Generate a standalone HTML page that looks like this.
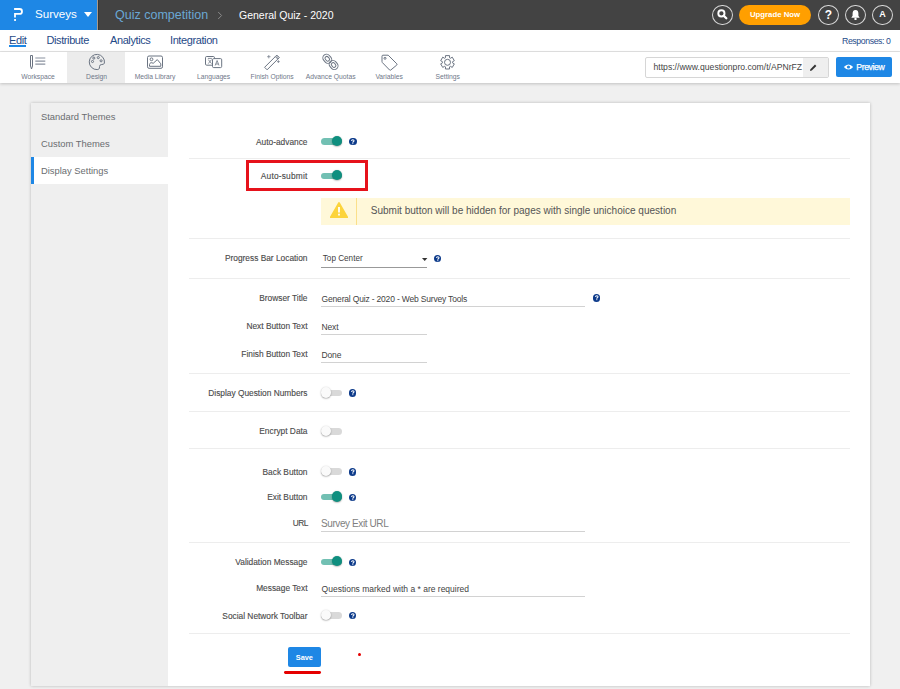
<!DOCTYPE html><html><head><meta charset="utf-8"><style>
*{margin:0;padding:0;box-sizing:border-box}
html,body{width:900px;height:689px;overflow:hidden;background:#f0f0f0;font-family:"Liberation Sans",sans-serif}
.a{position:absolute;white-space:nowrap}
.lab{position:absolute;right:592.5px;font-size:8.35px;color:#4a4a4a;-webkit-text-stroke:0.12px #4a4a4a;line-height:12px;text-align:right;white-space:nowrap}
.sep{position:absolute;left:189px;width:661px;height:1px;background:#ededed}
.tg{position:absolute;width:22px;height:12px}
.tg .tr{position:absolute;left:0.5px;top:3px;width:21px;height:6.5px;border-radius:3.5px;background:#d9d9d9}
.tg .kn{position:absolute;top:0.8px;width:10.2px;height:10.2px;border-radius:50%;background:#fafafa;box-shadow:0 0.6px 1.6px rgba(0,0,0,.38)}
.tg.on .tr{background:#72c0b3}
.tg.on .kn{left:11.6px;background:#0f8f7f}
.tg.off .kn{left:0}
.q{position:absolute;width:7.6px;height:7.6px;border-radius:50%;background:#0c3a8a}
.inp{position:absolute;border-bottom:1px solid #d2d2d2;font-size:8.5px;color:#424242;letter-spacing:-0.18px;white-space:nowrap}
</style></head><body>
<div class="a" style="left:0;top:0;width:900px;height:30px;background:#434343"></div>
<div class="a" style="left:0;top:0;width:97px;height:30px;background:#1e87e5"></div>
<div class="a" style="left:97px;top:0;width:1px;height:30px;background:#a89a8c"></div><div class="a" style="left:98px;top:0;width:1px;height:30px;background:#383838"></div>
<svg class="a" style="left:0;top:0" width="30" height="30" viewBox="0 0 30 30"><path d="M14.1 9H19.6Q22 9 22 11.4Q22 13.9 19.6 13.9H15V17.4" fill="none" stroke="#fff" stroke-width="1.8"/><rect x="14.1" y="19.1" width="1.9" height="1.8" fill="#fff"/></svg>
<div class="a" style="left:35px;top:6px;font-size:11.6px;color:#fff;line-height:16px">Surveys</div>
<svg class="a" style="left:84px;top:12px" width="8" height="5.5" viewBox="0 0 8 5.5"><path d="M0 0H8L4 5Z" fill="#fff"/></svg>
<div class="a" style="left:115px;top:6.5px;font-size:12.5px;color:#6aa8d5;line-height:17px">Quiz competition</div>
<svg class="a" style="left:217px;top:11px" width="6" height="9" viewBox="0 0 6 9"><path d="M1.2 1L4.6 4.5L1.2 8" fill="none" stroke="#8a8a8a" stroke-width="1"/></svg>
<div class="a" style="left:239px;top:7px;font-size:10.5px;color:#fff;line-height:16px">General Quiz - 2020</div>
<div class="a" style="left:712px;top:4.6px;width:20.8px;height:20.6px;border:1px solid #d8d8d8;border-radius:50%"></div>
<svg class="a" style="left:716px;top:8px" width="13" height="13" viewBox="0 0 13 13"><circle cx="5.4" cy="5.4" r="3.1" fill="none" stroke="#fff" stroke-width="1.9"/><path d="M7.7 7.7L10.3 10.3" stroke="#fff" stroke-width="2.3" stroke-linecap="round"/></svg>
<div class="a" style="left:739px;top:4.6px;width:72px;height:20.1px;border-radius:10px;background:#ff9f00;color:#fff;font-size:7.8px;font-weight:bold;text-align:center;line-height:19.8px">Upgrade Now</div>
<div class="a" style="left:818px;top:4.6px;width:20.8px;height:20.6px;border:1px solid #d8d8d8;border-radius:50%"></div>
<div class="a" style="left:818px;top:5px;width:21px;height:21px;color:#fff;font-weight:bold;font-size:12px;text-align:center;line-height:20px">?</div>
<div class="a" style="left:845px;top:4.6px;width:20.8px;height:20.6px;border:1px solid #d8d8d8;border-radius:50%"></div>
<svg class="a" style="left:850px;top:9px" width="11" height="12" viewBox="0 0 11 12"><path d="M5.5 1C3.3 1 2.6 2.8 2.6 4.5V6.8L1.3 8.8H9.7L8.4 6.8V4.5C8.4 2.8 7.7 1 5.5 1Z" fill="#fff"/><circle cx="5.5" cy="9.9" r="1.2" fill="#fff"/></svg>
<div class="a" style="left:872px;top:4.6px;width:20.8px;height:20.6px;border:1px solid #d8d8d8;border-radius:50%"></div>
<div class="a" style="left:872px;top:5px;width:21px;height:21px;color:#fff;font-weight:bold;font-size:9px;text-align:center;line-height:19.6px">A</div>
<div class="a" style="left:0;top:30px;width:900px;height:21.5px;background:#fff"></div>
<div class="a" style="left:9px;top:34px;font-size:11px;letter-spacing:-0.4px;color:#1f4a87;line-height:13px">Edit</div>
<div class="a" style="left:46.5px;top:34px;font-size:11px;letter-spacing:-0.4px;color:#1f4a87;line-height:13px">Distribute</div>
<div class="a" style="left:110px;top:34px;font-size:11px;letter-spacing:-0.4px;color:#1f4a87;line-height:13px">Analytics</div>
<div class="a" style="left:170px;top:34px;font-size:11px;letter-spacing:-0.4px;color:#1f4a87;line-height:13px">Integration</div>
<div class="a" style="left:9px;top:44.5px;width:16.5px;height:2px;background:#1e87e5"></div>
<div class="a" style="left:842px;top:36.3px;font-size:8.7px;letter-spacing:-0.38px;color:#1f4c8a;line-height:11px">Responses: 0</div>
<div class="a" style="left:0;top:51px;width:900px;height:1px;background:#e4e4e4"></div>
<div class="a" style="left:0;top:52px;width:900px;height:31px;background:#fff;box-shadow:0 1px 3px rgba(0,0,0,.2)"></div>
<div class="a" style="left:67px;top:52px;width:58.4px;height:31px;background:#ececec"></div>
<div class="a" style="left:8.00px;width:60px;top:71.5px;text-align:center;font-size:6.74px;color:#6f7889;line-height:10px">Workspace</div>
<div class="a" style="left:66.53px;width:60px;top:71.5px;text-align:center;font-size:6.74px;color:#6f7889;line-height:10px">Design</div>
<div class="a" style="left:125.06px;width:60px;top:71.5px;text-align:center;font-size:6.74px;color:#6f7889;line-height:10px">Media Library</div>
<div class="a" style="left:183.59px;width:60px;top:71.5px;text-align:center;font-size:6.74px;color:#6f7889;line-height:10px">Languages</div>
<div class="a" style="left:242.12px;width:60px;top:71.5px;text-align:center;font-size:6.74px;color:#6f7889;line-height:10px">Finish Options</div>
<div class="a" style="left:300.65px;width:60px;top:71.5px;text-align:center;font-size:6.74px;color:#6f7889;line-height:10px">Advance Quotas</div>
<div class="a" style="left:359.18px;width:60px;top:71.5px;text-align:center;font-size:6.74px;color:#6f7889;line-height:10px">Variables</div>
<div class="a" style="left:417.71px;width:60px;top:71.5px;text-align:center;font-size:6.74px;color:#6f7889;line-height:10px">Settings</div>
<svg class="a" style="left:0;top:52px" width="900" height="31" viewBox="0 52 900 31" fill="none" stroke="#6b7482" stroke-width="1">
<path d="M30.5 55.5H32.5V66L31.5 69L30.5 66Z" stroke-linejoin="round"/>
<path d="M35.3 58H45.3M35.3 61.1H45.3M35.3 64.2H45.3" stroke-width="1.2" stroke="#8a92a0"/>
<path d="M97.2 69.6A7.6 7.6 0 1 1 104.4 63.1Q104 64.6 101.8 64.5Q99.7 64.4 99.5 66.5L99.4 68.2Q99 69.6 97.2 69.6Z"/>
<circle cx="93.8" cy="58.1" r="1.05"/><circle cx="98.3" cy="57.6" r="1.05"/><circle cx="92.5" cy="61.5" r="1.05"/><circle cx="101.1" cy="60.8" r="1.05"/>
<rect x="147.5" y="56" width="15" height="12.3" rx="1.5"/>
<circle cx="151.5" cy="59.3" r="1.4"/>
<path d="M149.5 66.3H160.8V63.8L157.3 59.6L153.2 63.3Q150.2 61.6 149.5 64.5Z"/>
<rect x="205.5" y="56.5" width="9" height="8.7" rx="1.2"/>
<rect x="212.5" y="58.6" width="9.2" height="9" rx="1.2" fill="#fff"/>
<path d="M207.9 58.4H211.9M208.3 59.6L211.5 63.6M211.5 59.6L208.3 63.6" stroke-width=".8"/>
<path d="M215.2 65.5L217.1 60.5L219 65.5M215.8 64H218.4" stroke-width=".8"/>
<path d="M264.6 67.3L275.3 56.6L277.8 59.1L267.1 69.8Z" stroke-linejoin="round"/>
<path d="M275.3 56.6L276.8 55.1L279.3 57.6L277.8 59.1" stroke-linejoin="round"/>
<path d="M276 56.2L278.5 58.7M276.8 55.4L279 57.6" stroke-width=".6"/>
<path d="M268.8 55V58.4M267.1 56.7H270.5M278.4 60.2V63M277 61.6H279.8" stroke-width=".7"/>
<rect x="323.6" y="54" width="7.4" height="9.6" rx="3.7" transform="rotate(-42 327.3 58.8)"/>
<rect x="325.5" y="56.3" width="3.6" height="5" rx="1.8" transform="rotate(-42 327.3 58.8)"/>
<rect x="329.9" y="60.2" width="7.4" height="9.6" rx="3.7" transform="rotate(-42 333.6 65)"/>
<rect x="331.8" y="62.5" width="3.6" height="5" rx="1.8" transform="rotate(-42 333.6 65)"/>
<path d="M382 56.2Q382 55.2 383 55.2H388.2L396.8 63.8Q397.3 64.4 396.8 65L390.8 70Q390.2 70.5 389.6 70L382.4 62.6Q382 62.2 382 61.6Z" stroke-linejoin="round"/>
<circle cx="385" cy="58.3" r="1"/>
<path d="M445.47 57.73 L445.45 55.61 L449.55 55.61 L449.53 57.73 A5 5 0 0 1 450.44 58.25 L452.27 57.18 L454.32 60.73 L452.47 61.78 A5 5 0 0 1 452.47 62.82 L454.32 63.87 L452.27 67.42 L450.44 66.35 A5 5 0 0 1 449.53 66.87 L449.55 68.99 L445.45 68.99 L445.47 66.87 A5 5 0 0 1 444.56 66.35 L442.73 67.42 L440.68 63.87 L442.53 62.82 A5 5 0 0 1 442.53 61.78 L440.68 60.73 L442.73 57.18 L444.56 58.25 A5 5 0 0 1 445.47 57.73Z" stroke-linejoin="round"/>
<circle cx="447.5" cy="62.3" r="3"/>
</svg>
<div class="a" style="left:645px;top:57px;width:184px;height:20.5px;border:1px solid #d6d6d6;border-radius:2px;background:#fff"></div>
<div class="a" style="left:803px;top:58px;width:25px;height:18.5px;background:#efefef"></div>
<div class="a" style="left:653.5px;top:61.4px;font-size:8.64px;color:#454545;line-height:12px">https://www.questionpro.com/t/APNrFZ</div>
<svg class="a" style="left:808px;top:62.8px" width="10" height="10" viewBox="0 0 10 10"><path d="M2 8L2.4 6.2L7 1.6L8.4 3L3.8 7.6Z" fill="#333"/></svg>
<div class="a" style="left:835.6px;top:57px;width:56.4px;height:20.3px;border-radius:2px;background:#1e87e5"></div>
<svg class="a" style="left:843px;top:63px" width="11" height="8" viewBox="0 0 11 8"><path d="M0.8 4Q5.5 -1.2 10.2 4Q5.5 9.2 0.8 4Z" fill="#fff"/><circle cx="5.5" cy="4" r="1.6" fill="#1e87e5"/></svg>
<div class="a" style="left:856.3px;top:60.7px;font-size:8.7px;color:#fff;line-height:12px;letter-spacing:-0.4px;-webkit-text-stroke:0.25px #fff">Preview</div>
<div class="a" style="left:31px;top:103px;width:839px;height:583px;background:#fff;box-shadow:0 0 3px rgba(0,0,0,.24)"></div>
<div class="a" style="left:31px;top:103px;width:137.3px;height:583px;background:#efefef"></div>
<div class="a" style="left:31px;top:157px;width:137.3px;height:27px;background:#fff"></div>
<div class="a" style="left:31px;top:157px;width:3px;height:27px;background:#1e87e5"></div>
<div class="a" style="left:41px;top:103px;font-size:9.4px;color:#6a6d70;line-height:27px">Standard Themes</div>
<div class="a" style="left:41px;top:130px;font-size:9.4px;color:#6a6d70;line-height:27px">Custom Themes</div>
<div class="a" style="left:41px;top:157px;font-size:9.4px;color:#6a6d70;line-height:27px">Display Settings</div>
<div class="lab" style="top:135.9px;">Auto-advance</div>
<div class="tg on" style="left:320.5px;top:135.0px"><div class="tr"></div><div class="kn"></div></div>
<div class="q" style="left:349.0px;top:137.5px"></div>
<svg class="a" style="left:349.0px;top:137.5px" width="7.6" height="7.6" viewBox="0 0 8 8"><path d="M2.7 3.1Q2.7 1.8 4 1.8Q5.3 1.8 5.3 2.9Q5.3 3.6 4.5 4Q4 4.3 4 4.9" fill="none" stroke="#fff" stroke-width="1.1"/><rect x="3.45" y="5.5" width="1.1" height="1" fill="#fff"/></svg>
<div class="sep" style="top:158px"></div>
<div class="a" style="left:246.2px;top:160px;width:121.6px;height:30.8px;border:3px solid #e6121b"></div>
<div class="lab" style="top:170.3px;letter-spacing:0.2px">Auto-submit</div>
<div class="tg on" style="left:320.5px;top:169.5px"><div class="tr"></div><div class="kn"></div></div>
<div class="a" style="left:321px;top:197.8px;width:529px;height:26.8px;background:#fff8d9"></div>
<div class="a" style="left:355.8px;top:197.8px;width:1px;height:26.8px;background:#fbe08a"></div>
<svg class="a" style="left:330px;top:202px" width="18" height="16" viewBox="0 0 18 16"><path d="M9 1.0L17.2 15.2H0.8Z" fill="#fcd43c" stroke="#fcd43c" stroke-width="1.8" stroke-linejoin="round"/><rect x="8.1" y="5" width="1.8" height="5.5" fill="#fff"/><rect x="8.1" y="11.7" width="1.8" height="1.8" fill="#fff"/></svg>
<div class="a" style="left:370.7px;top:205.2px;font-size:10.04px;color:#555;line-height:12px">Submit button will be hidden for pages with single unichoice question</div>
<div class="sep" style="top:238px"></div>
<div class="lab" style="top:252.2px;">Progress Bar Location</div>
<div class="inp" style="left:321.4px;top:251.5px;width:105.5px;height:16.5px;border-bottom-color:#999;padding-left:1.4px;font-size:8.16px;letter-spacing:0;line-height:13px">Top Center</div>
<svg class="a" style="left:421.5px;top:257.8px" width="7" height="4" viewBox="0 0 7 4"><path d="M0 0H5.4L2.7 3Z" fill="#333"/></svg>
<div class="q" style="left:433.8px;top:254.7px"></div>
<svg class="a" style="left:433.8px;top:254.7px" width="7.6" height="7.6" viewBox="0 0 8 8"><path d="M2.7 3.1Q2.7 1.8 4 1.8Q5.3 1.8 5.3 2.9Q5.3 3.6 4.5 4Q4 4.3 4 4.9" fill="none" stroke="#fff" stroke-width="1.1"/><rect x="3.45" y="5.5" width="1.1" height="1" fill="#fff"/></svg>
<div class="sep" style="top:278px"></div>
<div class="lab" style="top:291.8px;">Browser Title</div>
<div class="inp" style="left:321px;top:291.5px;width:264.3px;height:15.3px;padding-left:0.6px;padding-top:1.9px;line-height:12px">General Quiz - 2020 - Web Survey Tools</div>
<div class="q" style="left:592.6px;top:294.0px"></div>
<svg class="a" style="left:592.6px;top:294.0px" width="7.6" height="7.6" viewBox="0 0 8 8"><path d="M2.7 3.1Q2.7 1.8 4 1.8Q5.3 1.8 5.3 2.9Q5.3 3.6 4.5 4Q4 4.3 4 4.9" fill="none" stroke="#fff" stroke-width="1.1"/><rect x="3.45" y="5.5" width="1.1" height="1" fill="#fff"/></svg>
<div class="lab" style="top:319.8px;">Next Button Text</div>
<div class="inp" style="left:321px;top:319.5px;width:106px;height:15.3px;padding-left:0.6px;padding-top:1.9px;line-height:12px">Next</div>
<div class="lab" style="top:347.8px;">Finish Button Text</div>
<div class="inp" style="left:321px;top:347.5px;width:106px;height:15.3px;padding-left:0.6px;padding-top:1.9px;line-height:12px">Done</div>
<div class="sep" style="top:373px"></div>
<div class="lab" style="top:386.9px;">Display Question Numbers</div>
<div class="tg off" style="left:320.5px;top:386.7px"><div class="tr"></div><div class="kn"></div></div>
<div class="q" style="left:348.9px;top:389.1px"></div>
<svg class="a" style="left:348.9px;top:389.1px" width="7.6" height="7.6" viewBox="0 0 8 8"><path d="M2.7 3.1Q2.7 1.8 4 1.8Q5.3 1.8 5.3 2.9Q5.3 3.6 4.5 4Q4 4.3 4 4.9" fill="none" stroke="#fff" stroke-width="1.1"/><rect x="3.45" y="5.5" width="1.1" height="1" fill="#fff"/></svg>
<div class="sep" style="top:411px"></div>
<div class="lab" style="top:425.1px;">Encrypt Data</div>
<div class="tg off" style="left:320.5px;top:425.0px"><div class="tr"></div><div class="kn"></div></div>
<div class="sep" style="top:448px"></div>
<div class="lab" style="top:465.6px;">Back Button</div>
<div class="tg off" style="left:320.5px;top:465.2px"><div class="tr"></div><div class="kn"></div></div>
<div class="q" style="left:348.9px;top:468.0px"></div>
<svg class="a" style="left:348.9px;top:468.0px" width="7.6" height="7.6" viewBox="0 0 8 8"><path d="M2.7 3.1Q2.7 1.8 4 1.8Q5.3 1.8 5.3 2.9Q5.3 3.6 4.5 4Q4 4.3 4 4.9" fill="none" stroke="#fff" stroke-width="1.1"/><rect x="3.45" y="5.5" width="1.1" height="1" fill="#fff"/></svg>
<div class="lab" style="top:491.3px;">Exit Button</div>
<div class="tg on" style="left:320.5px;top:490.7px"><div class="tr"></div><div class="kn"></div></div>
<div class="q" style="left:348.9px;top:493.5px"></div>
<svg class="a" style="left:348.9px;top:493.5px" width="7.6" height="7.6" viewBox="0 0 8 8"><path d="M2.7 3.1Q2.7 1.8 4 1.8Q5.3 1.8 5.3 2.9Q5.3 3.6 4.5 4Q4 4.3 4 4.9" fill="none" stroke="#fff" stroke-width="1.1"/><rect x="3.45" y="5.5" width="1.1" height="1" fill="#fff"/></svg>
<div class="lab" style="top:516.9px;letter-spacing:-0.5px;margin-right:-0.5px">URL</div>
<div class="inp" style="left:321px;top:515px;width:264.3px;height:16.8px;font-size:10px;letter-spacing:-0.4px;color:#808080;line-height:13px;padding-top:1.8px">Survey Exit URL</div>
<div class="sep" style="top:542px"></div>
<div class="lab" style="top:556.2px;">Validation Message</div>
<div class="tg on" style="left:320.5px;top:555.5px"><div class="tr"></div><div class="kn"></div></div>
<div class="q" style="left:348.9px;top:558.6px"></div>
<svg class="a" style="left:348.9px;top:558.6px" width="7.6" height="7.6" viewBox="0 0 8 8"><path d="M2.7 3.1Q2.7 1.8 4 1.8Q5.3 1.8 5.3 2.9Q5.3 3.6 4.5 4Q4 4.3 4 4.9" fill="none" stroke="#fff" stroke-width="1.1"/><rect x="3.45" y="5.5" width="1.1" height="1" fill="#fff"/></svg>
<div class="lab" style="top:581.8px;">Message Text</div>
<div class="inp" style="left:321px;top:581.5px;width:264.3px;height:15.6px;padding-left:0.6px;padding-top:1.9px;letter-spacing:0;line-height:12px">Questions marked with a * are required</div>
<div class="lab" style="top:609.6px;">Social Network Toolbar</div>
<div class="tg off" style="left:320.5px;top:609.2px"><div class="tr"></div><div class="kn"></div></div>
<div class="q" style="left:348.9px;top:611.8px"></div>
<svg class="a" style="left:348.9px;top:611.8px" width="7.6" height="7.6" viewBox="0 0 8 8"><path d="M2.7 3.1Q2.7 1.8 4 1.8Q5.3 1.8 5.3 2.9Q5.3 3.6 4.5 4Q4 4.3 4 4.9" fill="none" stroke="#fff" stroke-width="1.1"/><rect x="3.45" y="5.5" width="1.1" height="1" fill="#fff"/></svg>
<div class="sep" style="top:633px"></div>
<div class="a" style="left:288px;top:647.1px;width:32.7px;height:20.2px;border-radius:2px;background:#1e87e5;color:#fff;font-size:7.4px;font-weight:bold;text-align:center;line-height:22.4px">Save</div>
<div class="a" style="left:283.6px;top:671.2px;width:37.4px;height:2.7px;border-radius:1.4px;background:#e50000"></div>
<div class="a" style="left:358.4px;top:652.6px;width:2.9px;height:3.1px;border-radius:50%;background:#e50000"></div>
</body></html>
